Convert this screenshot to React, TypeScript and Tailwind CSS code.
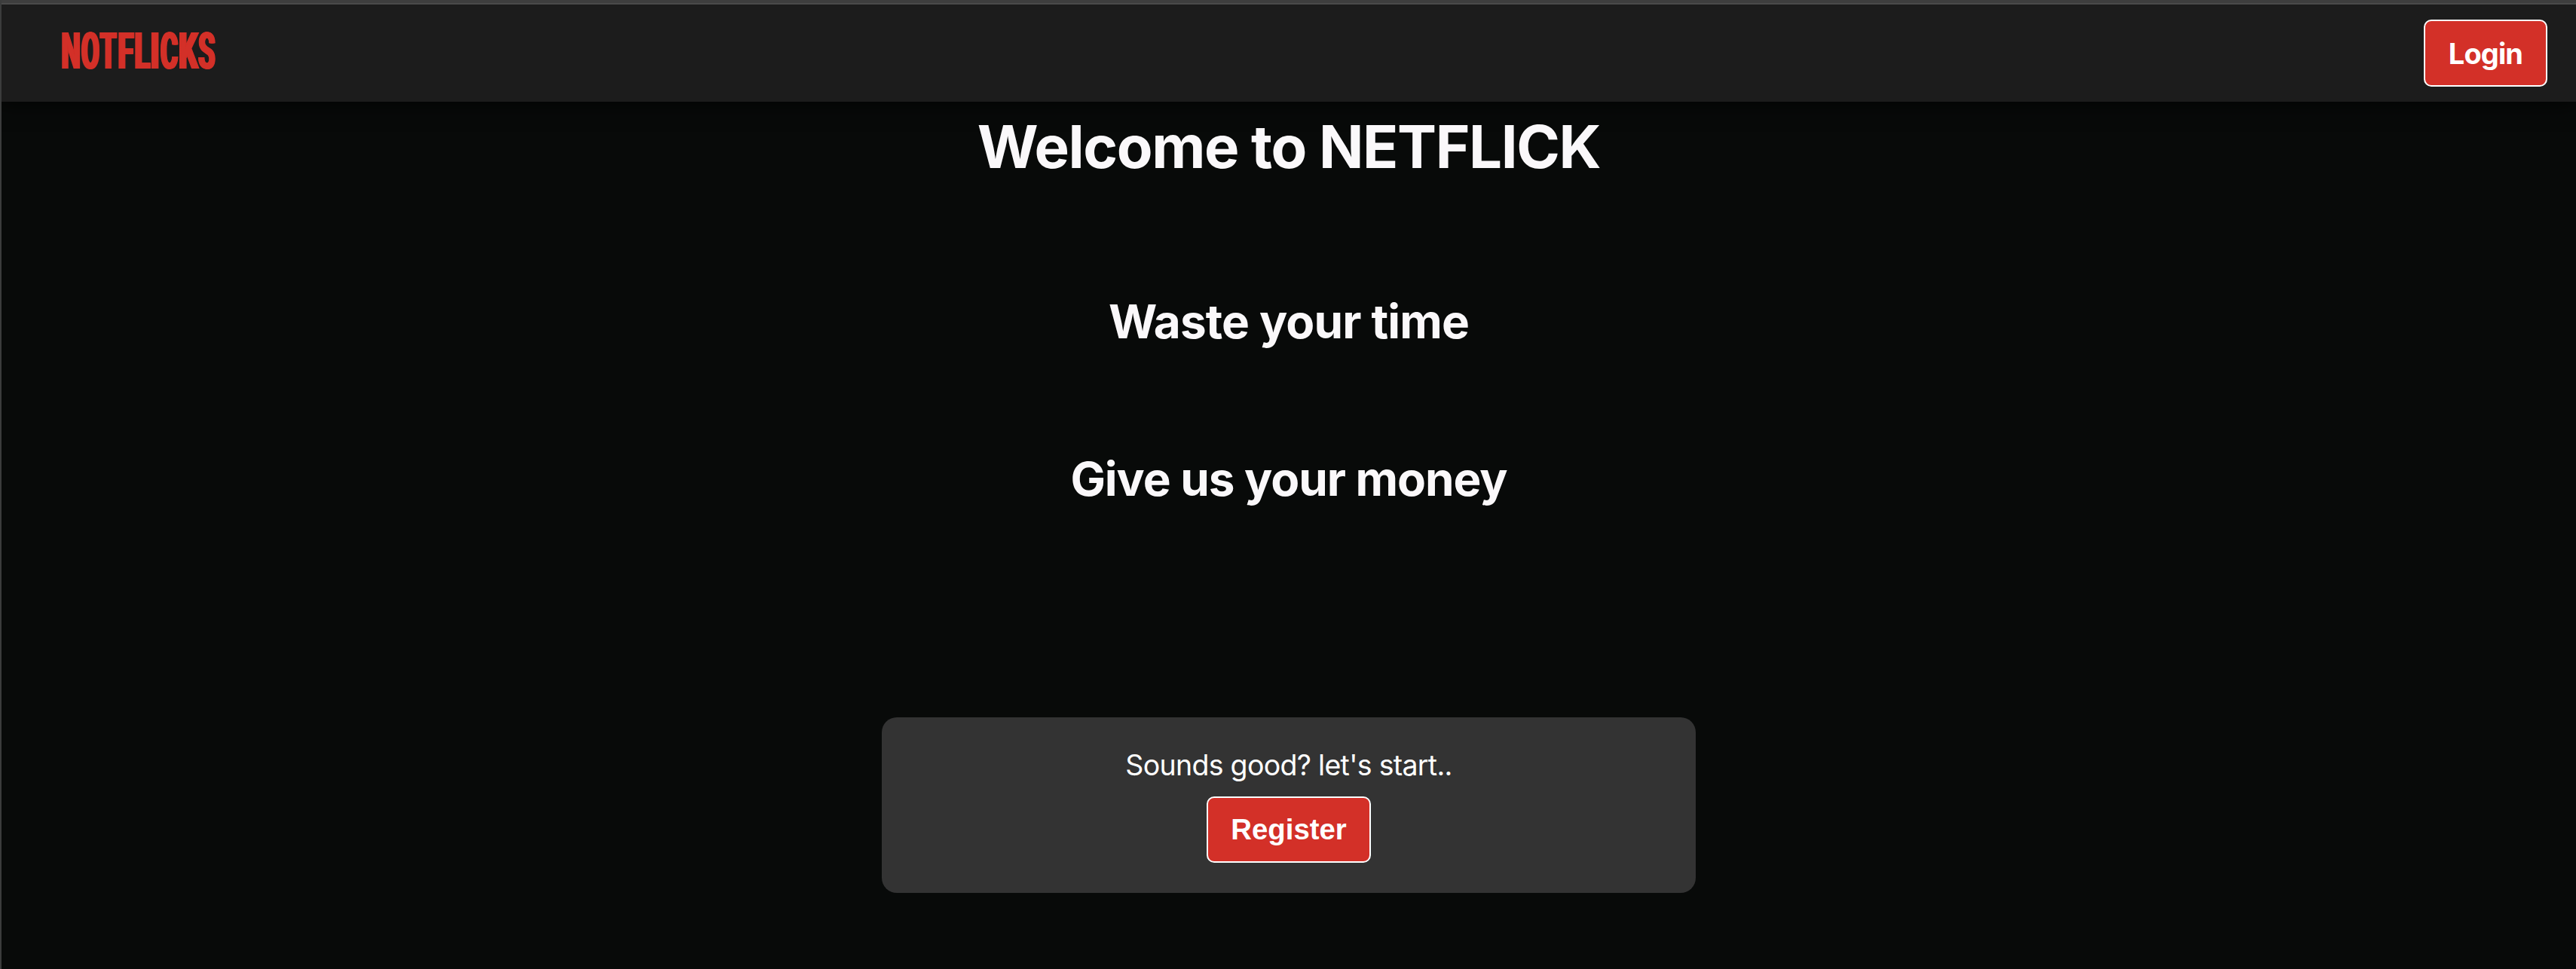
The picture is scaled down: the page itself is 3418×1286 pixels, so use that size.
const letters = [
  { c: "N", cell: "w-[25px]", scale: "scale-x-[0.54]" },
  { c: "O", cell: "w-[25.5px]", scale: "scale-x-[0.52]" },
  { c: "T", cell: "w-[23.5px]", scale: "scale-x-[0.52]" },
  { c: "F", cell: "w-[22.5px]", scale: "scale-x-[0.57]" },
  { c: "L", cell: "w-[21.5px]", scale: "scale-x-[0.57]" },
  { c: "I", cell: "w-[12.5px]", scale: "scale-x-[0.6]" },
  { c: "C", cell: "w-[25.5px]", scale: "scale-x-[0.53]" },
  { c: "K", cell: "w-[25.5px]", scale: "scale-x-[0.6]" },
  { c: "S", cell: "w-[23px]", scale: "scale-x-[0.54]" },
];

function Logo() {
  return (
    <div className="flex h-[66px] font-[Roboto,sans-serif] text-[66px] leading-[66px] font-bold text-[#d33028]">
      {letters.map(({ c, cell, scale }) => (
        <span key={c} className={`flex justify-center ${cell}`}>
          <span
            className={`shrink-0 ${scale} [text-shadow:-1px_0_#d33028,1px_0_#d33028,-2px_0_#d33028,2px_0_#d33028,-3px_0_#d33028,3px_0_#d33028]`}
          >
            {c}
          </span>
        </span>
      ))}
    </div>
  );
}

export default function App() {
  return (
    <div className="flex h-[1286px] w-full flex-col overflow-hidden border-l-2 border-[#3b3c3c] bg-[#080a09] font-[Inter,sans-serif] text-[#faf8fa]">
      <div className="relative z-10 -ml-0.5 h-1 shrink-0 bg-[#3e3e3e]" />
      <header className="-ml-0.5 flex h-[131px] shrink-0 items-start justify-between border-t-2 border-l-2 border-t-[#4a4a4a] border-l-[#4a4a4a] bg-[#1c1c1c] pr-[38px] pl-[79.5px] shadow-[0_4px_24px_rgba(0,0,0,0.7)]">
        <div className="pt-[30px]">
          <Logo />
        </div>
        <button className="mt-5 h-[89px] w-[164px] rounded-[10px] border-2 border-white bg-[#d33028] pt-0.5 text-[38px] leading-[83px] font-bold tracking-[-0.9px] text-white">
          Login
        </button>
      </header>
      <main className="flex flex-col items-center">
        <h1 className="mt-[12px] text-[78px] leading-[96px] font-bold tracking-[-1.4px]">Welcome to NETFLICK</h1>
        <h2 className="mt-[144px] text-[62px] leading-[80px] font-bold tracking-[-0.85px]">Waste your time</h2>
        <h2 className="mt-[129px] text-[62px] leading-[80px] font-bold tracking-[-1.05px]">Give us your money</h2>
        <section className="mt-[276px] flex h-[233px] w-[1080px] flex-col items-center rounded-[20px] bg-[#333333] text-white">
          <p className="mt-[40px] text-[37.5px] leading-[48px] tracking-[-0.7px]">Sounds good? let's start..</p>
          <button className="mt-[17px] h-[88px] w-[218px] rounded-[10px] border-2 border-white bg-[#d33028] font-['Liberation_Sans',sans-serif] text-[38.4px] leading-[84px] font-bold">
            Register
          </button>
        </section>
      </main>
    </div>
  );
}
